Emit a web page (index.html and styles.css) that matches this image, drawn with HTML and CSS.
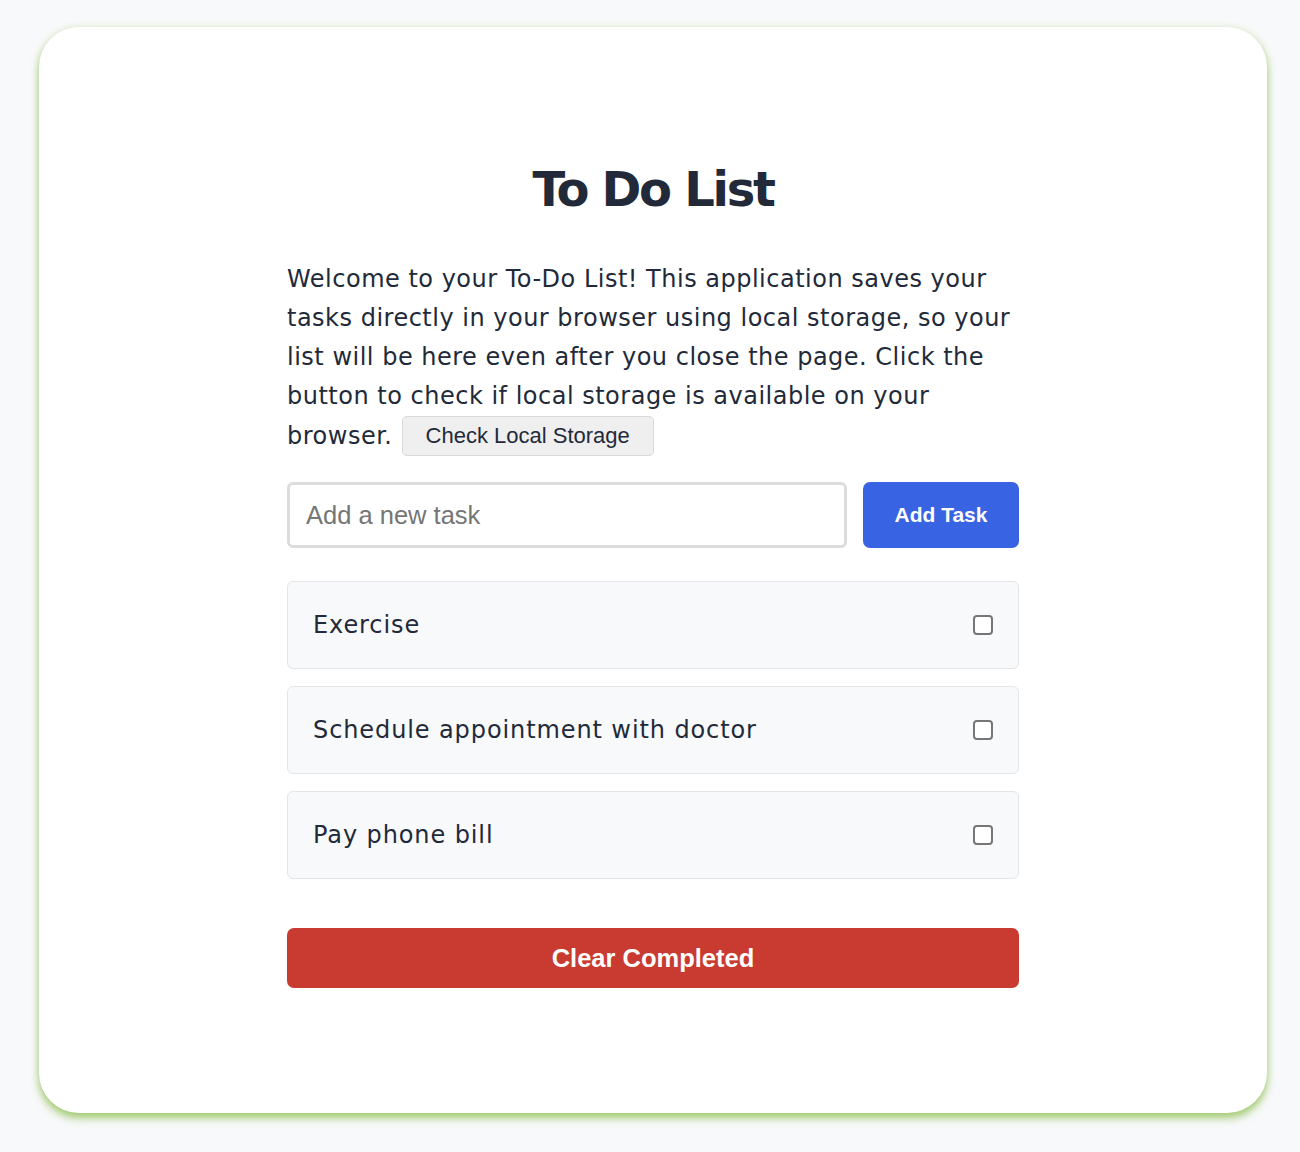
FILE: index.html
```html
<!DOCTYPE html>
<html lang="en">
<head>
<meta charset="utf-8">
<title>To Do List</title>
<link rel="stylesheet" href="styles.css">
</head>
<body>
<main class="card">
  <div class="content">
    <h1 class="title">To Do List</h1>
    <p class="intro">Welcome to your To-Do List! This application saves your<br>tasks directly in your browser using local storage, so your<br>list will be here even after you close the page. Click the<br>button to check if local storage is available on your<br>browser. <button class="check-btn">Check Local Storage</button></p>
    <div class="add-row">
      <input class="task-input" type="text" placeholder="Add a new task">
      <button class="add-btn">Add Task</button>
    </div>
    <ul class="task-list">
      <li class="task"><span class="task-text">Exercise</span><span class="box"></span></li>
      <li class="task"><span class="task-text">Schedule appointment with doctor</span><span class="box"></span></li>
      <li class="task"><span class="task-text">Pay phone bill</span><span class="box"></span></li>
    </ul>
    <button class="clear-btn">Clear Completed</button>
  </div>
</main>
</body>
</html>
```

FILE: styles.css
```css
* { box-sizing: border-box; }
html, body { margin: 0; padding: 0; }
body {
  background: #f8f9fa;
  font-family: "DejaVu Sans", sans-serif;
  color: #222a39;
  padding: 27px 33px 39px 39px;
}
.card {
  width: 1228px;
  height: 1086px;
  background: #ffffff;
  border-radius: 40px;
  box-shadow: 0 5px 8px rgba(140, 190, 80, 0.8), 0 0 6px rgba(140, 190, 80, 0.15);
  padding-top: 133px;
}
.content {
  width: 732px;
  margin: 0 auto;
  display: flex;
  flex-direction: column;
}
.title {
  margin: 0;
  font-size: 48px;
  line-height: 58px;
  font-weight: 700;
  text-align: center;
  letter-spacing: -2.3px;
}
.intro {
  margin: 42px 0 0;
  font-size: 24px;
  line-height: 39px;
  letter-spacing: 0.5px;
  white-space: nowrap;
}
.check-btn {
  font-family: "Liberation Sans", Arial, sans-serif;
  font-size: 22px;
  letter-spacing: 0;
  color: #222a39;
  background: #efefef;
  border: 1px solid #d9d9d9;
  border-radius: 5px;
  height: 40px;
  padding: 0 23px;
  margin-left: 1px;
  vertical-align: 1px;
  line-height: 38px;
}
.add-row {
  display: flex;
  gap: 16px;
  margin-top: 26px;
}
.task-input {
  flex: 1;
  height: 66px;
  border: 3px solid #dcdcdc;
  border-radius: 6px;
  padding: 0 16px;
  font-family: "Liberation Sans", Arial, sans-serif;
  font-size: 25.5px;
  color: #222a39;
  outline: none;
}
.task-input::placeholder { color: #767676; }
.add-btn {
  width: 156px;
  height: 66px;
  background: #3863e3;
  color: #fff;
  border: none;
  border-radius: 7px;
  font-family: "Liberation Sans", Arial, sans-serif;
  font-weight: 700;
  font-size: 21px;
}
.task-list {
  list-style: none;
  margin: 33px 0 0;
  padding: 0;
  display: flex;
  flex-direction: column;
  gap: 17px;
}
.task {
  height: 88px;
  background: #f8f9fa;
  border: 1px solid #e3e5e8;
  border-radius: 6px;
  display: flex;
  align-items: center;
  justify-content: space-between;
  padding: 0 25px 0 25px;
  font-size: 24px;
  letter-spacing: 0.9px;
}
.box {
  width: 20px;
  height: 20px;
  border: 2px solid #767676;
  border-radius: 4px;
  background: #fff;
}
.clear-btn {
  margin-top: 49px;
  height: 60px;
  width: 100%;
  background: #c93a31;
  color: #fff;
  border: none;
  border-radius: 7px;
  font-family: "Liberation Sans", Arial, sans-serif;
  font-weight: 700;
  font-size: 25.5px;
}
```
